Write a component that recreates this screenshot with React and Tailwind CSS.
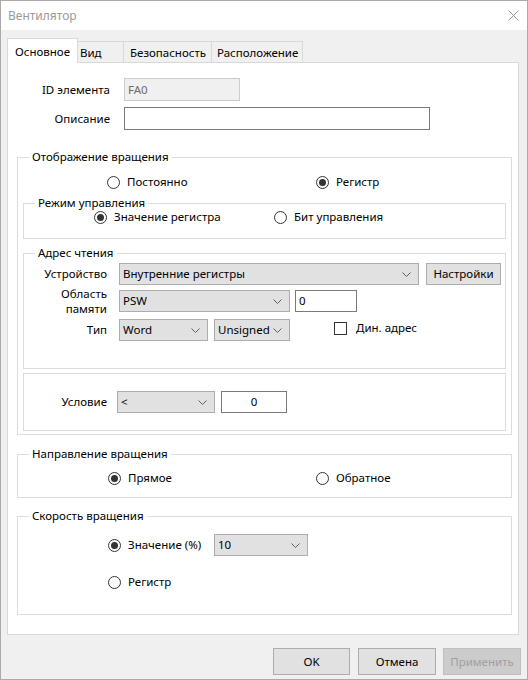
import React from "react";

// Small chevron used by the combo boxes
const Chevron = () => (
  <svg width="9" height="5" viewBox="0 0 9 5" className="shrink-0">
    <polyline points="0.5,0.5 4.5,4.5 8.5,0.5" fill="none" stroke="#606060" strokeWidth="1" />
  </svg>
);

const Radio = ({ checked, label }) => (
  <div className="flex items-center h-[16px]">
    <span className="w-[13px] h-[13px] rounded-full border border-[#333333] bg-white flex items-center justify-center shrink-0">
      {checked && <span className="w-[7px] h-[7px] rounded-full bg-[#333333]" />}
    </span>
    <span className="ml-[7px] whitespace-nowrap">{label}</span>
  </div>
);

const Select = ({ value, className = "" }) => (
  <div
    className={`flex items-center justify-between h-[22px] bg-[#e1e1e1] border border-[#adadad] pl-[3px] pr-[7px] ${className}`}
  >
    <span className="whitespace-nowrap overflow-hidden">{value}</span>
    <Chevron />
  </div>
);

const GroupBox = ({ title, className = "", children }) => (
  <div className={`relative border border-[#dcdcdc] ${className}`}>
    <span className="absolute left-[11px] -top-[9px] px-[3px] bg-white leading-[16px] whitespace-nowrap">
      {title}
    </span>
    {children}
  </div>
);

const tabs = ["Основное", "Вид", "Безопасность", "Расположение"];

export default function App() {
  return (
    <div className="w-[528px] h-[680px] border border-[#aaaaaa] bg-[#f0f0f0] flex flex-col text-[11.5px] text-black font-['Noto_Sans',sans-serif] leading-[16px]">
      {/* Title bar */}
      <div className="h-[29px] bg-white flex items-center pl-[7px] pr-[8px] shrink-0">
        <span className="text-[#999999] text-[12px]">Вентилятор</span>
        <svg width="11" height="11" viewBox="0 0 11 11" className="ml-auto">
          <path d="M0.5 0.5 L10.5 10.5 M10.5 0.5 L0.5 10.5" stroke="#8a8a8a" strokeWidth="0.9" />
        </svg>
      </div>

      <div className="flex-1 px-[6px] flex flex-col">
        {/* Tab strip */}
        <div className="mt-[8px] flex items-end h-[24px]">
          <div className="relative z-10 h-[25px] -mb-px w-[71px] bg-white border border-b-0 border-[#d9d9d9] pl-[7px] pt-[5px]">
            {tabs[0]}
          </div>
          <div className="h-[21px] w-[46px] border border-l-0 border-b-0 border-[#d9d9d9] pl-[2px] pt-[3px]">
            {tabs[1]}
          </div>
          <div className="h-[21px] w-[88px] border border-l-0 border-b-0 border-[#d9d9d9] pl-[6px] pt-[3px]">
            {tabs[2]}
          </div>
          <div className="h-[21px] w-[91px] border border-l-0 border-b-0 border-[#d9d9d9] pl-[5px] pt-[3px]">
            {tabs[3]}
          </div>
        </div>

        {/* Tab page */}
        <div className="w-[512px] h-[573px] bg-white border border-[#d9d9d9] flex flex-col">
          <div className="mt-[15px] flex items-center">
            <span className="w-[102px] text-right">ID элемента</span>
            <div className="ml-[14px] w-[116px] h-[23px] bg-[#f0f0f0] border border-[#cccccc] text-[#6d6d6d] pl-[3px] flex items-center">
              FA0
            </div>
          </div>
          <div className="mt-[6px] flex items-center">
            <span className="w-[102px] text-right">Описание</span>
            <div className="ml-[14px] w-[306px] h-[23px] bg-white border border-[#7a7a7a]" />
          </div>

          {/* Rotation display */}
          <GroupBox title="Отображение вращения" className="mt-[27px] ml-[9px] w-[495px] h-[278px] shrink-0">
            <div className="mt-[16px] flex pl-[89px]">
              <div className="w-[209px]">
                <Radio label="Постоянно" />
              </div>
              <Radio checked label="Регистр" />
            </div>

            <GroupBox title="Режим управления" className="mt-[13px] ml-[5px] w-[483px] h-[36px]">
              <div className="mt-[5px] flex pl-[70px]">
                <div className="w-[180px]">
                  <Radio checked label="Значение регистра" />
                </div>
                <Radio label="Бит управления" />
              </div>
            </GroupBox>

            <GroupBox title="Адрес чтения" className="mt-[14px] ml-[5px] w-[483px] h-[116px]">
              <div className="mt-[9px] flex items-center">
                <span className="w-[83px] text-right">Устройство</span>
                <Select value="Внутренние регистры" className="ml-[12px] w-[300px]" />
                <div className="ml-[7px] w-[75px] h-[22px] bg-[#e1e1e1] border border-[#adadad] flex items-center justify-center">
                  Настройки
                </div>
              </div>
              <div className="mt-[5px] flex items-center">
                <div className="w-[83px] text-right -my-[4px] flex flex-col">
                  <span className="h-[15px] leading-[15px]">Область</span>
                  <span className="h-[15px] leading-[15px]">памяти</span>
                </div>
                <Select value="PSW" className="ml-[12px] w-[171px]" />
                <div className="ml-[5px] w-[62px] h-[22px] bg-white border border-[#7a7a7a] pl-[3px] flex items-center">
                  0
                </div>
              </div>
              <div className="mt-[7px] flex items-start">
                <span className="w-[83px] text-right leading-[22px]">Тип</span>
                <Select value="Word" className="ml-[12px] w-[89px]" />
                <Select value="Unsigned" className="ml-[6px] w-[76px] pr-[6px]" />
                <span className="ml-[44px] mt-[3px] w-[13px] h-[13px] border border-[#333333] bg-white" />
                <span className="ml-[9px] mt-[1px]">Дин. адрес</span>
              </div>
            </GroupBox>

            <div className="mt-[4px] ml-[5px] w-[483px] h-[58px] border border-[#dcdcdc]">
              <div className="mt-[17px] flex items-center">
                <span className="w-[83px] text-right">Условие</span>
                <Select value="<" className="ml-[10px] w-[98px]" />
                <div className="ml-[6px] w-[66px] h-[22px] bg-white border border-[#7a7a7a] flex items-center justify-center">
                  0
                </div>
              </div>
            </div>
          </GroupBox>

          {/* Rotation direction */}
          <GroupBox title="Направление вращения" className="mt-[19px] ml-[9px] w-[495px] h-[44px] shrink-0">
            <div className="mt-[15px] flex pl-[90px]">
              <div className="w-[208px]">
                <Radio checked label="Прямое" />
              </div>
              <Radio label="Обратное" />
            </div>
          </GroupBox>

          {/* Rotation speed */}
          <GroupBox title="Скорость вращения" className="mt-[18px] ml-[9px] w-[495px] h-[99px] shrink-0">
            <div className="mt-[17px] flex items-center pl-[90px]">
              <div className="w-[106px]">
                <Radio checked label="Значение (%)" />
              </div>
              <Select value="10" className="w-[94px]" />
            </div>
            <div className="mt-[18px] pl-[90px]">
              <Radio label="Регистр" />
            </div>
          </GroupBox>
        </div>

        {/* Dialog buttons */}
        <div className="mt-[13px] flex justify-end">
          <div className="w-[77px] h-[27px] bg-[#e1e1e1] border border-[#adadad] flex items-center justify-center">
            OK
          </div>
          <div className="ml-[8px] w-[78px] h-[27px] bg-[#e1e1e1] border border-[#adadad] flex items-center justify-center">
            Отмена
          </div>
          <div className="ml-[7px] w-[78px] h-[27px] bg-[#cccccc] border border-[#bfbfbf] text-[#a0a0a0] flex items-center justify-center">
            Применить
          </div>
        </div>
      </div>
    </div>
  );
}
